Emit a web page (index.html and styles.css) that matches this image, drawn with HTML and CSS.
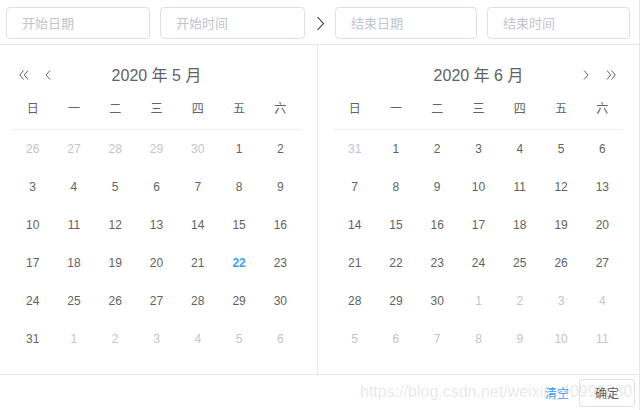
FILE: index.html
```html
<!DOCTYPE html>
<html lang="zh">
<head>
<meta charset="utf-8">
<title>日期时间范围</title>
<link rel="stylesheet" href="styles.css">
</head>
<body>
<div class="picker">
  <div class="time-header">
    <span class="input w144">开始日期</span>
    <span class="input w145 gap">开始时间</span>
    <span class="range-arrow">
      <svg width="9" height="15" viewBox="0 0 9 15"><polyline points="1.5,1 7.5,7.5 1.5,14" fill="none" stroke="#303133" stroke-width="1.1"/></svg>
    </span>
    <span class="input w142">结束日期</span>
    <span class="input w143 gap">结束时间</span>
  </div>
  <div class="content">
    <div class="panel left">
      <div class="head">
        <div class="btns">
          <svg class="darrow" width="10" height="10" viewBox="0 0 10 10"><polyline points="4.5,0.5 0.8,5 4.5,9.5" fill="none" stroke="#606266" stroke-width="1"/><polyline points="9,0.5 5.3,5 9,9.5" fill="none" stroke="#606266" stroke-width="1"/></svg>
          <svg class="arrow-l" width="6" height="10" viewBox="0 0 6 10"><polyline points="5,0.5 1,5 5,9.5" fill="none" stroke="#606266" stroke-width="1"/></svg>
        </div>
        <div class="label">2020 年 5 月</div>
        <div class="btns end"></div>
      </div>
      <div class="table">
        <div class="th">日</div><div class="th">一</div><div class="th">二</div><div class="th">三</div><div class="th">四</div><div class="th">五</div><div class="th">六</div>
        <div class="td off">26</div><div class="td off">27</div><div class="td off">28</div><div class="td off">29</div><div class="td off">30</div><div class="td">1</div><div class="td">2</div>
        <div class="td">3</div><div class="td">4</div><div class="td">5</div><div class="td">6</div><div class="td">7</div><div class="td">8</div><div class="td">9</div>
        <div class="td">10</div><div class="td">11</div><div class="td">12</div><div class="td">13</div><div class="td">14</div><div class="td">15</div><div class="td">16</div>
        <div class="td">17</div><div class="td">18</div><div class="td">19</div><div class="td">20</div><div class="td">21</div><div class="td today">22</div><div class="td">23</div>
        <div class="td">24</div><div class="td">25</div><div class="td">26</div><div class="td">27</div><div class="td">28</div><div class="td">29</div><div class="td">30</div>
        <div class="td">31</div><div class="td off">1</div><div class="td off">2</div><div class="td off">3</div><div class="td off">4</div><div class="td off">5</div><div class="td off">6</div>
      </div>
    </div>
    <div class="panel right">
      <div class="head">
        <div class="btns"></div>
        <div class="label">2020 年 6 月</div>
        <div class="btns end">
          <svg class="arrow-r" width="6" height="10" viewBox="0 0 6 10"><polyline points="1,0.5 5,5 1,9.5" fill="none" stroke="#606266" stroke-width="1"/></svg>
          <svg class="darrow-r" width="10" height="10" viewBox="0 0 10 10"><polyline points="1,0.5 4.7,5 1,9.5" fill="none" stroke="#606266" stroke-width="1"/><polyline points="5.5,0.5 9.2,5 5.5,9.5" fill="none" stroke="#606266" stroke-width="1"/></svg>
        </div>
      </div>
      <div class="table">
        <div class="th">日</div><div class="th">一</div><div class="th">二</div><div class="th">三</div><div class="th">四</div><div class="th">五</div><div class="th">六</div>
        <div class="td off">31</div><div class="td">1</div><div class="td">2</div><div class="td">3</div><div class="td">4</div><div class="td">5</div><div class="td">6</div>
        <div class="td">7</div><div class="td">8</div><div class="td">9</div><div class="td">10</div><div class="td">11</div><div class="td">12</div><div class="td">13</div>
        <div class="td">14</div><div class="td">15</div><div class="td">16</div><div class="td">17</div><div class="td">18</div><div class="td">19</div><div class="td">20</div>
        <div class="td">21</div><div class="td">22</div><div class="td">23</div><div class="td">24</div><div class="td">25</div><div class="td">26</div><div class="td">27</div>
        <div class="td">28</div><div class="td">29</div><div class="td">30</div><div class="td off">1</div><div class="td off">2</div><div class="td off">3</div><div class="td off">4</div>
        <div class="td off">5</div><div class="td off">6</div><div class="td off">7</div><div class="td off">8</div><div class="td off">9</div><div class="td off">10</div><div class="td off">11</div>
      </div>
    </div>
  </div>
  <div class="footer">
    <span class="link">清空</span>
    <span class="btn">确定</span>
  </div>
  <div class="watermark">https://blog.csdn.net/weixin_40998880</div>
</div>
</body>
</html>
```

FILE: styles.css
```css
* { box-sizing: border-box; }
html, body { margin: 0; padding: 0; background: #fff; }
body {
  font-family: "Liberation Sans", Arial, "Noto Sans CJK SC", sans-serif;
  color: #606266;
  font-size: 12px;
}
.picker {
  position: relative;
  width: 640px;
  height: 410px;
  border-right: 1px solid #e4e7ed;
  overflow: hidden;
}
.time-header {
  height: 45px;
  border-bottom: 1px solid #e4e7ed;
  padding: 7px 0 0 6px;
  display: flex;
  align-items: flex-start;
}
.input {
  height: 32px;
  border: 1px solid #dcdfe6;
  border-radius: 4px;
  padding-left: 15px;
  font-size: 13px;
  line-height: 30px;
  color: #c0c4cc;
  font-family: "Noto Sans CJK SC", sans-serif;
}
.w144 { width: 144px; }
.w145 { width: 145px; }
.w142 { width: 142px; }
.w143 { width: 143px; }
.gap { margin-left: 10px; }
.range-arrow {
  width: 30px;
  height: 32px;
  display: flex;
  align-items: center;
  justify-content: center;
  padding-left: 1px;
}
.content { display: flex; height: 329px; }
.panel { padding: 16px 16px 16px 0; }
.panel.left { width: 318px; padding-left: 12px; border-right: 1px solid #e4e7ed; }
.panel.right { width: 321px; padding-left: 16px; }
.head {
  height: 28px;
  display: grid;
  grid-template-columns: 1fr auto 1fr;
  align-items: center;
}
.btns { display: flex; align-items: center; }
.btns.end { justify-content: flex-end; }
.darrow { margin-left: 7px; }
.arrow-l { margin-left: 16px; }
.arrow-r { margin-right: 17px; }
.darrow-r { margin-right: 7px; }
.label {
  font-size: 16px;
  color: #606266;
  padding-bottom: 2px;
}
.table {
  width: 289px;
  display: grid;
  grid-template-columns: repeat(7, 1fr);
  grid-auto-rows: 38px;
}
.th {
  height: 41px;
  border-bottom: 1px solid #ebeef5;
  display: flex;
  align-items: center;
  justify-content: center;
  padding-bottom: 3px;
  font-family: "Noto Sans CJK SC", sans-serif;
  font-size: 12px;
}
.td {
  display: flex;
  align-items: center;
  justify-content: center;
  padding-top: 5px;
  font-size: 12px;
}
.td.off { color: #c0c4cc; }
.td.today { color: #409eff; font-weight: bold; }
.footer {
  border-top: 1px solid #e4e7ed;
  height: 36px;
  display: flex;
  justify-content: flex-end;
  align-items: flex-start;
  padding: 4px 4px 0 0;
}
.link {
  color: #409eff;
  font-family: "Noto Sans CJK SC", sans-serif;
  font-size: 12px;
  line-height: 28px;
  margin-right: 10px;
}
.btn {
  height: 28px;
  width: 56px;
  border: 1px solid #dcdfe6;
  border-radius: 3px;
  text-align: center;
  line-height: 26px;
  font-family: "Noto Sans CJK SC", sans-serif;
  font-size: 12px;
  color: #606266;
}
.watermark {
  position: absolute;
  left: 360px;
  top: 382px;
  font-size: 16px;
  line-height: 20px;
  color: rgba(0, 0, 0, 0.11);
  white-space: nowrap;
  pointer-events: none;
}
```
